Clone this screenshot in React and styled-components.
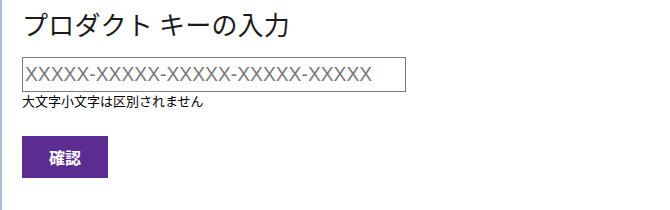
import React from 'react'
import styled, { createGlobalStyle } from 'styled-components'

const GlobalStyle = createGlobalStyle`
  html, body {
    margin: 0;
    padding: 0;
    background: #fff;
  }
  body {
    font-family: "Noto Sans CJK JP", "Noto Sans", sans-serif;
  }
`

const Page = styled.main`
  box-sizing: border-box;
  min-height: 210px;
  border-left: 2px solid #a8b9cf;
  padding: 5px 0 0 20px;
`

const Title = styled.h1`
  margin: 0;
  font-size: 26px;
  font-weight: 400;
  line-height: 38px;
  letter-spacing: 0.2px;
  color: #1b1b1b;
`

const Field = styled.div`
  display: flex;
  flex-direction: column;
  margin-top: 14px;
`

const KeyInput = styled.input`
  box-sizing: border-box;
  width: 384px;
  height: 35px;
  margin: 0;
  padding: 0 3px 0 2px;
  border: 1px solid #7a7a7a;
  border-radius: 0;
  font-family: "Liberation Sans", Arial, sans-serif;
  font-size: 19.3px;
  color: #1b1b1b;
  outline: none;

  &::placeholder {
    color: #7a7a7a;
  }
`

const Hint = styled.span`
  font-size: 13px;
  line-height: 17px;
  color: #000;
`

const Button = styled.button`
  margin-top: 27px;
  width: 86px;
  height: 42px;
  border: none;
  background: #5c2d91;
  color: #fff;
  font-family: "Noto Sans CJK JP", sans-serif;
  font-size: 16px;
  font-weight: 700;
  cursor: pointer;
`

const App = () => {
  return (
    <>
      <GlobalStyle />
      <Page>
        <Title>プロダクト キーの入力</Title>
        <Field>
          <KeyInput placeholder='XXXXX-XXXXX-XXXXX-XXXXX-XXXXX' />
          <Hint>大文字小文字は区別されません</Hint>
        </Field>
        <Button>確認</Button>
      </Page>
    </>
  )
}

export default App
